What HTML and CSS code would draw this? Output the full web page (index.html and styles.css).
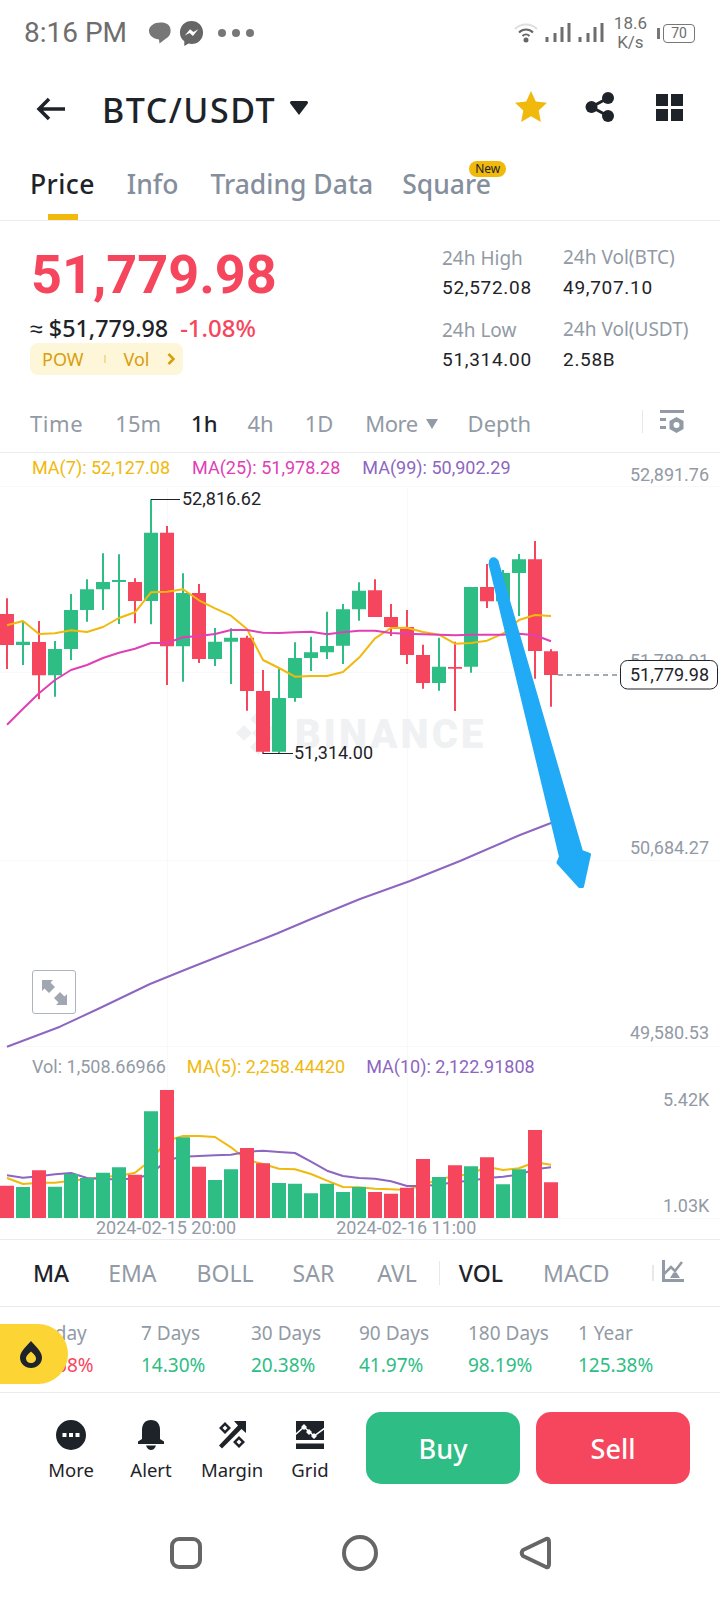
FILE: index.html
```html
<!DOCTYPE html>
<html lang="en">
<head>
<meta charset="utf-8">
<title>BTC/USDT</title>
<link rel="stylesheet" href="styles.css">
</head>
<body>
<div class="page">
  <div class="status">
    <div class="status-left">
      <span class="clock">8:16 PM</span>
      <svg class="st-chat" viewBox="0 0 24 26"><path d="M5 4.500C7 2 17 1.500 20 4.500C24 8 23.500 16 18 18.500L11.500 23.500L11 19.500C4 19 .5 14 1 10C1.300 7.500 3 5.500 5 4.500Z"/></svg>
      <svg class="st-msg" viewBox="0 0 26 28"><path d="M13 1C6 1 1 6 1 13C1 17 2.500 20 5.500 22V27L10 24.500C11 24.800 12 25 13 25C20 25 25 20 25 13C25 6 20 1 13 1Z"/><path class="st-bolt" d="M6 16L11.500 9.500L15 12.500L20 9.500L14.500 16.500L11 13.500Z"/></svg>
      <span class="st-dots"><i></i><i></i><i></i></span>
    </div>
    <div class="status-right">
      <svg class="st-wifi" viewBox="0 0 24 20"><path class="st-wifi-off" d="M1 6C7 0 17 0 23 6"/><path d="M5 9.500C9 5.500 15 5.500 19 9.500M8.500 13C10.500 11 13.500 11 15.500 13"/><circle cx="12" cy="17" r="1.500"/></svg>
      <svg class="st-sig" viewBox="0 0 26 20"><path d="M2 14v5M10 10v9M17 4v15M24 0v19"/></svg>
      <svg class="st-sig" viewBox="0 0 26 20"><path d="M2 14v5M10 10v9M17 4v15M24 0v19"/></svg>
      <span class="st-speed"><span>18.6</span><span>K/s</span></span>
      <span class="st-batt-nub"></span>
      <span class="st-batt">70</span>
    </div>
  </div>

  <div class="nav">
    <svg class="nav-back" viewBox="0 0 30 24"><path d="M29 12H4M13 2L3 12L13 22"/></svg>
    <span class="nav-title">BTC/USDT</span>
    <svg class="nav-caret" viewBox="0 0 18 14"><path d="M0 1.500Q0 0 1.500 0H16.500Q18 0 18 1.500Q18 2.500 17 3.500L9 14L1 3.500Q0 2.500 0 1.500Z"/></svg>
    <span class="nav-fill"></span>
    <svg class="nav-star" viewBox="0 0 32 31"><path d="M16 0L20.800 10.400L32 11.800L23.700 19.500L25.900 31L16 25.300L6.100 31L8.300 19.500L0 11.800L11.200 10.400Z"/></svg>
    <svg class="nav-share" viewBox="0 0 30 30"><circle cx="23" cy="6" r="6"/><circle cx="23" cy="24" r="6"/><circle cx="6.500" cy="15" r="6"/><path class="nav-share-l" d="M23 6L6.500 15L23 24"/></svg>
    <svg class="nav-grid" viewBox="0 0 27 27"><path d="M0 0h12v12H0zM15 0h12v12H15zM0 15h12v12H0zM15 15h12v12H15z"/></svg>
  </div>

  <div class="tabs">
    <span class="tab tab-on">Price</span>
    <span class="tab">Info</span>
    <span class="tab">Trading Data</span>
    <span class="tab tab-new">Square<em class="new-badge">New</em></span>
  </div>

  <div class="summary">
    <div class="sum-left">
      <div class="last-price">51,779.98</div>
      <div class="fiat-row"><span class="fiat">≈ $51,779.98</span><span class="change">-1.08%</span></div>
      <div class="tag"><span>POW</span><i class="tag-sep"></i><span>Vol</span><svg class="tag-chev" viewBox="0 0 8 12"><path d="M1.500 1L6.500 6L1.500 11"/></svg></div>
    </div>
    <div class="sum-stats">
      <div class="stat"><span class="stat-k">24h High</span><span class="stat-v">52,572.08</span></div>
      <div class="stat"><span class="stat-k stat-k-up">24h Vol(BTC)</span><span class="stat-v">49,707.10</span></div>
      <div class="stat"><span class="stat-k">24h Low</span><span class="stat-v">51,314.00</span></div>
      <div class="stat"><span class="stat-k stat-k-up">24h Vol(USDT)</span><span class="stat-v">2.58B</span></div>
    </div>
  </div>

  <div class="intervals">
    <span class="iv iv-time">Time</span>
    <span class="iv iv-15">15m</span>
    <span class="iv iv-on iv-1h">1h</span>
    <span class="iv iv-4h">4h</span>
    <span class="iv iv-1d">1D</span>
    <span class="iv iv-more">More</span>
    <svg class="iv-caret" viewBox="0 0 12 10"><path d="M0 0H12L6 10Z"/></svg>
    <span class="iv iv-depth">Depth</span>
    <span class="iv-fill"></span>
    <i class="iv-sep"></i>
    <svg class="iv-cfg" viewBox="0 0 24 23"><path class="cfg-fill" d="M0 0h24v3H0zM0 8h6v3H0zM0 16h6v3H0z"/><path class="cfg-hex" d="M16.500 7L23.500 11V19L16.500 23L9.500 19V11Z"/><circle class="cfg-hole" cx="16.500" cy="15" r="3"/></svg>
  </div>

  <div class="chart">
    <svg class="chart-svg" viewBox="0 453 720 786">
      <path class="grid" d="M0 486.500H720M0 672.500H720M0 860.500H720M0 1046.500H720M0 1218.500H720M167.500 486V1218M407.500 486V1218"/>
      <g class="mark">
        <path d="M258 711l8 8l-8 8l-8-8zM244 725l8 8l-8 8l-8-8zM272 725l8 8l-8 8l-8-8zM258 739l8 8l-8 8l-8-8zM258 727l6 6l-6 6l-6-6z"/>
        <text class="mark-text" x="295" y="748">BINANCE</text>
      </g>
      <path class="wick-up" d="M23 621.700V665M55 641V696.700M71 594V660M87 579.300V621.700M103 553.300V610M119 554.300V624M151 499.300V624.300M183 573.300V681.700M215 628V666M231 628.300V684M279 668.300V754M295 642.300V701.700M311 636.700V671M327 611.700V659M343 604V664M359 582.300V620.700M439 637.700V690.700M471 587V672.700M503 570V601.300M519 554V616"/>
      <path class="wick-down" d="M7 598.300V669M39 621V699.300M135 578.300V623.300M167 526V685M199 584V663M247 635.700V710.700M263 670V754M375 579.300V616.700M391 604V636M407 610V664M423 644.700V688.700M455 641.700V711M487 564V608M535 541V678.700M551 649.300V706.700"/>
      <path class="body-up" d="M16 641.700h14v3.300h-14zM48 649h14v26.300h-14zM64 610h14v39h-14zM80 589.300h14v20.700h-14zM96 582h14v7.300h-14zM112 580h14v2h-14zM144 532.700h14v68.300h-14zM176 593h14v53.300h-14zM208 641.700h14v17.300h-14zM224 637.700h14v4h-14zM272 698h14v53.700h-14zM288 658h14v40h-14zM304 652.300h14v5.700h-14zM320 646h14v6.300h-14zM336 609.300h14v36.400h-14zM352 590.700h14v18.600h-14zM432 666.700h14v16.300h-14zM464 587h14v79.700h-14zM496 573h14v28.300h-14zM512 559.300h14v13.700h-14z"/>
      <path class="body-down" d="M0 614h14v31H0zM32 642h14v33.300h-14zM128 582h14v19h-14zM160 532.700h14v113.600h-14zM192 593h14v66h-14zM240 637.700h14v53.300h-14zM256 691h14v60.700h-14zM368 590.300h14v26.700h-14zM384 617h14v10h-14zM400 627h14v28h-14zM416 655h14v28h-14zM448 667h14v1.700h-14zM480 587h14v14.300h-14zM528 559.300h14v91.700h-14zM544 651.300h14v23.700h-14z"/>
      <polyline class="ln ln-y" points="7,625.300 23,621 39,634 55,633.300 71,630.300 87,632 103,627 119,618 135,612.300 151,592.300 167,591.700 183,589.300 199,600.300 215,608.300 231,615.700 247,629 263,660 279,668 295,676.700 311,676 327,676 343,672 360,656.700 375,638.300 391,628 407,627.700 423,632 439,634.700 455,643.700 471,643 487,640.700 503,633.700 519,620 535,615 551,616"/>
      <polyline class="ln ln-p" points="7,724.700 23,708.700 39,693.300 55,680 71,670 87,665 103,658 119,652.700 135,648.700 151,643 167,643 183,637.300 199,636 215,634 231,630 247,630 263,632.700 279,633 295,632.300 311,631.700 327,634.300 343,632.300 359,630.700 375,630.700 391,633 407,633.700 423,634.300 439,634.700 455,635.300 471,634.700 487,634.700 503,634.700 519,633.700 535,635.300 551,641.300"/>
      <polyline class="ln ln-v" points="7,1046.700 60,1026.700 100,1008 150,984 187,969 230,952 277,933.500 310,919.500 360,899 410,881 460,861 520,835 551,823"/>
      <path class="leader" d="M151 499.500H180M263 753.500H293"/>
      <text class="ax ax-dark" x="182" y="505">52,816.62</text>
      <text class="ax ax-dark" x="294" y="759">51,314.00</text>
      <text class="ax" x="630" y="481">52,891.76</text>
      <text class="ax" x="630" y="667">51,788.91</text>
      <text class="ax" x="630" y="854">50,684.27</text>
      <text class="ax" x="630" y="1039">49,580.53</text>
      <text class="ax" x="663" y="1106">5.42K</text>
      <text class="ax" x="663" y="1212">1.03K</text>
      <path class="dash" d="M558 675H620"/>
      <rect class="pbox" x="620.500" y="660.500" width="97" height="28.500" rx="7"/>
      <text class="ax ax-dark" x="630" y="681">51,779.98</text>
      <g class="arrow">
        <circle cx="493.500" cy="562" r="4.700"/>
        <polygon points="490,564 560.500,856.700 558,862.700 579.500,886.500 582.500,886.500 589.500,854.500 581.500,851.500 497,561"/>
      </g>

      <polyline class="ln ln-y2" points="7,1178 23,1184 39,1182.700 55,1182.700 71,1180.700 87,1179.300 103,1176.700 119,1176 135,1172.700 151,1160 167,1140.700 183,1136 199,1136 215,1137 231,1147.300 247,1160 263,1164 279,1168.700 295,1169.300 311,1174 327,1180.700 343,1187 359,1187.300 375,1188.700 391,1189.300 407,1190 423,1184.700 439,1179.300 455,1176 471,1174 487,1166.700 503,1170 519,1168.300 535,1162.300 551,1164.700"/>
      <polyline class="ln ln-v2" points="7,1175.300 23,1177.700 39,1176.300 55,1174.300 71,1173 87,1178 103,1179.300 119,1179.300 135,1178.700 151,1174 167,1160 183,1156.700 199,1156 215,1155.300 231,1154.700 247,1151.700 263,1150.700 279,1152 295,1153 311,1161.700 327,1170.700 343,1176 359,1178 375,1178.700 391,1181.300 407,1186 423,1186 439,1184.700 455,1182 471,1180.700 487,1178 503,1176.700 519,1174.700 535,1169.300 551,1167.300"/>
      <path class="body-up" d="M16 1187h14v31h-14zM48 1186.700h14v31.300h-14zM64 1174h14v44h-14zM80 1178h14v40h-14zM96 1172.700h14v45.300h-14zM112 1167.300h14v50.700h-14zM144 1111.300h14v106.700h-14zM176 1137.300h14v80.700h-14zM208 1180h14v38h-14zM224 1169.300h14v48.700h-14zM272 1183h14v35h-14zM288 1183.700h14v34.300h-14zM304 1193.300h14v24.700h-14zM320 1183.700h14v34.300h-14zM336 1192h14v26h-14zM352 1187h14v31h-14zM432 1177h14v41h-14zM464 1166.300h14v51.700h-14zM496 1184.300h14v33.700h-14zM512 1169.300h14v48.700h-14z"/>
      <path class="body-down" d="M0 1185.700h14v32.300H0zM32 1170.300h14v47.700h-14zM128 1174.700h14v43.300h-14zM160 1090h14v128h-14zM192 1166.700h14v51.300h-14zM240 1148h14v70h-14zM256 1163.300h14v54.700h-14zM368 1192h14v26h-14zM384 1193.700h14v24.300h-14zM400 1187.700h14v30.300h-14zM416 1159h14v59h-14zM448 1165.300h14v52.700h-14zM480 1157.300h14v60.700h-14zM528 1130h14v88h-14zM544 1182.300h14v35.700h-14z"/>
    </svg>
    <div class="legend legend-ma">
      <span class="c-y">MA(7): 52,127.08</span>
      <span class="c-p">MA(25): 51,978.28</span>
      <span class="c-v">MA(99): 50,902.29</span>
    </div>
    <div class="legend legend-vol">
      <span class="c-g">Vol: 1,508.66966</span>
      <span class="c-y">MA(5): 2,258.44420</span>
      <span class="c-v">MA(10): 2,122.91808</span>
    </div>
    <button class="expand" type="button" aria-label="Expand">
      <svg viewBox="0 0 25 25"><path d="M0 0H11L8.500 2.500L13 7L7 13L2.500 8.500L0 11ZM25 25H14L16.500 22.500L12 18L18 12L22.500 16.500L25 14Z"/></svg>
    </button>
    <div class="dates"><span>2024-02-15 20:00</span><span>2024-02-16 11:00</span></div>
  </div>

  <div class="indicators">
    <span class="ind ind-on ind-ma">MA</span>
    <span class="ind ind-ema">EMA</span>
    <span class="ind ind-boll">BOLL</span>
    <span class="ind ind-sar">SAR</span>
    <span class="ind ind-avl">AVL</span>
    <i class="ind-sep"></i>
    <span class="ind ind-on ind-vol">VOL</span>
    <span class="ind ind-macd">MACD</span>
    <i class="ind-fade"></i>
    <svg class="ind-icon" viewBox="0 0 22 22"><path class="ind-zig" d="M2 14L9 7L13 11L20 2"/><path d="M0 0h3v19h19v3H0zM8 18L11.500 12.500H14.500L18 18Z"/></svg>
  </div>

  <div class="perf">
    <div class="perf-col perf-today"><span class="perf-k">Today</span><span class="perf-v v-down">-1.68%</span></div>
    <div class="perf-col perf-7"><span class="perf-k">7 Days</span><span class="perf-v">14.30%</span></div>
    <div class="perf-col perf-30"><span class="perf-k">30 Days</span><span class="perf-v">20.38%</span></div>
    <div class="perf-col perf-90"><span class="perf-k">90 Days</span><span class="perf-v">41.97%</span></div>
    <div class="perf-col perf-180"><span class="perf-k">180 Days</span><span class="perf-v">98.19%</span></div>
    <div class="perf-col perf-1y"><span class="perf-k">1 Year</span><span class="perf-v">125.38%</span></div>
    <div class="fire">
      <svg viewBox="0 0 22 27"><path fill-rule="evenodd" d="M11 0C14 4 22 10 22 16.500C22 22.500 17 27 11 27C5 27 0 22.500 0 16.500C0 10 8 4 11 0ZM11 10.500C9 12.500 6 14.500 6 17.500C6 20 8 22 11 22C14 22 16 20 16 17.500C16 14.500 13 12.500 11 10.500Z"/></svg>
    </div>
  </div>

  <div class="actions">
    <div class="act act-more">
      <svg class="act-ic" viewBox="0 0 30 30"><path fill-rule="evenodd" d="M15 0A15 15 0 1 1 15 30A15 15 0 1 1 15 0ZM6.500 13v4h4v-4zM13 13v4h4v-4zM19.500 13v4h4v-4z"/></svg>
      <span>More</span>
    </div>
    <div class="act act-alert">
      <svg class="act-ic" viewBox="0 0 26 30"><path d="M13 0C19 0 22 4 22 10V19L26 21.500V24H0V21.500L4 19V10C4 4 7 0 13 0ZM8 25.500H18C17 28.500 15 30 13 30C11 30 9 28.500 8 25.500Z"/></svg>
      <span>Alert</span>
    </div>
    <div class="act act-margin">
      <svg class="act-ic" viewBox="0 0 27 28"><path fill-rule="evenodd" d="M15 0H27V12L22.500 8L3 27.500L0 24.500L19 4.500ZM6 1L12 7L6 13L0 7ZM6 4.500L3.500 7L6 9.500L8.500 7ZM20 15L26 21L20 27L14 21ZM20 18.500L17.500 21L20 23.500L22.500 21Z"/></svg>
      <span>Margin</span>
    </div>
    <div class="act act-grid">
      <svg class="act-ic" viewBox="0 0 28 28"><path d="M0 0H28V19H0ZM0 22.500H28V28H0Z"/><path class="grid-zig" d="M-1 14L8 6L18 15L29 7"/><path class="grid-dot" d="M8 3L11 6L8 9L5 6ZM13 8L16 11L13 14L10 11ZM18 12L21 15L18 18L15 15Z"/></svg>
      <span>Grid</span>
    </div>
    <div class="act-buttons">
      <span class="btn btn-buy">Buy</span>
      <span class="btn btn-sell">Sell</span>
    </div>
  </div>

  <div class="sysnav">
    <svg class="sys-sq" viewBox="0 0 32 32"><rect x="2" y="2" width="28" height="28" rx="7"/></svg>
    <svg class="sys-ci" viewBox="0 0 36 36"><circle cx="18" cy="18" r="16"/></svg>
    <svg class="sys-tr" viewBox="0 0 32 34"><path d="M27 3Q30 2 30 6V28Q30 32 27 31L4 20Q1.500 17 4 14Z"/></svg>
  </div>
</div>
</body>
</html>
```

FILE: styles.css
```css
* { box-sizing: border-box; }
html, body { margin: 0; padding: 0; background: #fff; }
body { font-family: "Noto Sans", "Liberation Sans", sans-serif; color: #1e2329; }
.page { width: 720px; height: 1600px; overflow: hidden; display: flex; flex-direction: column; }

/* status bar */
.status { height: 66px; flex: none; display: flex; justify-content: space-between; align-items: center; padding: 0 25px 0 24px; color: #6e6e6e; font-family: Roboto, sans-serif; }
.status-left, .status-right { display: flex; align-items: center; }
.clock { font-size: 28px; line-height: 30px; }
.st-chat { width: 24px; height: 26px; margin-left: 21px; fill: #777; }
.st-msg { width: 25px; height: 27px; margin-left: 7px; fill: #666; }
.st-bolt { fill: #fff; }
.st-dots { display: flex; gap: 6px; margin-left: 14px; }
.st-dots i { width: 8px; height: 8px; border-radius: 50%; background: #777; }
.st-wifi { width: 24px; height: 20px; fill: #666; stroke: #666; stroke-width: 2; margin-right: 7px; }
.st-wifi path { fill: none; }
.st-wifi-off { stroke: #dedede; }
.st-sig { width: 26px; height: 20px; fill: none; stroke: #6e6e6e; stroke-width: 3; margin-right: 7px; }
.st-speed { display: flex; flex-direction: column; align-items: center; font-size: 17px; line-height: 19px; margin-left: 3px; margin-right: 10px; }
.st-batt-nub { width: 3px; height: 11px; background: #777; margin-right: 3px; }
.st-batt { width: 32px; height: 19px; border: 1.500px solid #777; border-radius: 4px; font-size: 14px; line-height: 16px; text-align: center; }

/* header */
.nav { height: 84px; flex: none; display: flex; align-items: center; padding: 0 36px; }
.nav-back { width: 30px; height: 24px; fill: none; stroke: #1e2329; stroke-width: 3.500; margin-top: 1px; flex: none; }
.nav-title { font-size: 34px; font-weight: 500; line-height: 40px; margin-left: 36px; letter-spacing: 1.500px; margin-top: 4px; }
.nav-caret { width: 18px; height: 14px; fill: #1e2329; margin-left: 14px; margin-top: 0; }
.nav-fill { flex: 1; }
.nav-star { width: 32px; height: 31px; fill: #f0b90b; margin-right: 38px; margin-top: -3px; }
.nav-share { width: 30px; height: 30px; fill: #1e2329; margin-right: 41px; margin-top: -3px; }
.nav-share-l { fill: none; stroke: #1e2329; stroke-width: 3; }
.nav-grid { width: 27px; height: 27px; fill: #1e2329; margin-top: -2px; margin-right: 1px; }

/* tabs */
.tabs { height: 71px; flex: none; display: flex; align-items: flex-start; border-bottom: 1px solid #eaecef; padding: 15px 0 0 30px; gap: 32px; }
.tab { position: relative; font-size: 26.500px; line-height: 38px; font-weight: 500; color: #848e9c; }
.tab-on { color: #1e2329; letter-spacing: .4px; }
.tab-on::after { content: ""; position: absolute; left: 18px; top: 49px; width: 30px; height: 6px; background: #f0b90b; }
.tab-new { margin-left: -3px; }
.new-badge { position: absolute; left: 67px; top: -4px; width: 37px; height: 16px; border-radius: 8px; background: #f0b90b; color: #1e2329; font-style: normal; font-weight: 400; font-size: 12px; line-height: 16px; text-align: center; }

/* summary */
.summary { height: 169px; flex: none; display: flex; justify-content: space-between; padding: 0 26px 0 30px; }
.last-price { font-family: Roboto, sans-serif; font-size: 54px; font-weight: 700; line-height: 66px; color: #f6465d; margin-top: 21px; padding-left: 1px; }
.fiat-row { display: flex; gap: 12px; margin-top: 5px; font-size: 23.300px; line-height: 30px; }
.fiat { font-weight: 500; }
.change { color: #f6465d; font-weight: 500; font-size: 24px; }
.tag { display: inline-flex; align-items: center; height: 32px; width: 153px; margin-top: 0; border-radius: 8px; background: #fef6d8; color: #d89f0c; font-size: 18px; padding-left: 12px; }
.tag-sep { width: 2px; height: 8px; background: #f2dc96; margin: 0 18px 0 20px; }
.tag-chev { width: 8px; height: 12px; fill: none; stroke: #d89f0c; stroke-width: 2.500; margin-left: 17px; }
.sum-stats { display: grid; grid-template-columns: 121px 131px; grid-auto-rows: 72px; padding-top: 23px; }
.stat { display: flex; flex-direction: column; gap: 3px; }
.stat-k { color: #929aa5; font-size: 19px; line-height: 28px; }
.stat-k-up { margin-top: -1px; margin-bottom: 1px; }
.stat-v { font-family: Roboto, sans-serif; font-size: 19px; line-height: 26px; letter-spacing: .7px; }

/* interval row */
.intervals { height: 63px; flex: none; display: flex; align-items: center; border-bottom: 1px solid #eaecef; padding: 4px 36px 0 30px; }
.iv { font-size: 22px; line-height: 30px; color: #929aa5; margin-right: 32px; }
.iv-on { color: #1e2329; font-weight: 500; }
.iv-time { letter-spacing: .6px; }
.iv-15 { margin-right: 30px; }
.iv-1h { margin-right: 30px; }
.iv-4h { margin-right: 31px; }
.iv-more { margin-right: 8px; letter-spacing: -.5px; }
.iv-caret { width: 12px; height: 10px; fill: #929aa5; margin: 2px 30px 0 0; }
.iv-depth { margin-right: 0; }
.iv-fill { flex: 1; }
.iv-sep { width: 1px; height: 23px; background: #e6e8ea; margin-right: 17px; margin-top: -4px; }
.iv-cfg { width: 24px; height: 23px; margin-top: -4px; }
.cfg-fill, .cfg-hex { fill: #929aa5; }
.cfg-hole { fill: #fff; }

/* chart */
.chart { position: relative; height: 787px; flex: none; border-bottom: 1px solid #eaecef; font-family: Roboto, sans-serif; }
.chart-svg { position: absolute; left: 0; top: 0; width: 720px; height: 786px; display: block; }
.grid { stroke: #f8f8f8; stroke-width: 1; fill: none; }
.mark { fill: #f0f1f2; }
.mark-text { font-family: Roboto, sans-serif; font-size: 40px; font-weight: 900; letter-spacing: 3px; }
.wick-up { stroke: #2ebd85; stroke-width: 2; fill: none; }
.wick-down { stroke: #f6465d; stroke-width: 2; fill: none; }
.body-up { fill: #2ebd85; }
.body-down { fill: #f6465d; }
.ln { fill: none; stroke-width: 2; stroke-linejoin: round; }
.ln-y, .ln-y2 { stroke: #f0b90b; }
.ln-p { stroke: #e040b5; }
.ln-v, .ln-v2 { stroke: #8d66c0; }
.leader { stroke: #1e2329; stroke-width: 1; fill: none; }
.ax { font-family: Roboto, sans-serif; font-size: 18px; fill: #929aa5; }
.ax-dark { fill: #1e2329; }
.dash { stroke: #848e9c; stroke-width: 1.500; stroke-dasharray: 5 4; fill: none; }
.pbox { fill: #fff; stroke: #1e2329; stroke-width: 1; }
.arrow { fill: #21aaf6; stroke: #21aaf6; stroke-width: 3; stroke-linejoin: round; }
.arrow circle { stroke: none; }
.legend { position: absolute; left: 32px; display: flex; line-height: 22px; font-size: 18px; }
.legend-ma { top: 4px; gap: 22px; }
.legend-vol { top: 603px; gap: 21px; }
.c-y { color: #f0b90b; }
.c-p { color: #e040b5; }
.c-v { color: #8d66c0; }
.c-g { color: #929aa5; }
.expand { position: absolute; left: 32px; top: 517px; width: 44px; height: 44px; padding: 8.500px; border: 1.500px solid #aeb4bc; border-radius: 3px; background: #fff; }
.expand svg { display: block; width: 25px; height: 25px; fill: #a0a7b1; }
.dates { position: absolute; left: 96px; top: 764px; display: flex; gap: 100px; font-size: 18px; line-height: 22px; color: #929aa5; }

/* indicators */
.indicators { height: 67px; flex: none; display: flex; align-items: center; border-bottom: 1px solid #eaecef; padding: 0 0 0 33px; }
.ind { font-size: 23px; line-height: 30px; color: #929aa5; }
.ind-on { color: #1e2329; font-weight: 500; }
.ind-ma { margin-right: 39px; }
.ind-ema { margin-right: 40px; }
.ind-boll { margin-right: 39px; }
.ind-sar { margin-right: 43px; }
.ind-avl { margin-right: 22px; }
.ind-sep { width: 1px; height: 24px; background: #e6e8ea; margin-right: 19px; }
.ind-vol { margin-right: 40px; }
.ind-macd { margin-right: 42px; }
.ind-fade { width: 2px; height: 16px; background: #e6e8ea; margin-right: 8px; }
.ind-icon { width: 22px; height: 22px; fill: #929aa5; margin-top: -4px; }
.ind-zig { fill: none; stroke: #929aa5; stroke-width: 2.500; }

/* performance */
.perf { position: relative; height: 86px; flex: none; border-bottom: 1px solid #eaecef; display: flex; padding-left: 34px; padding-top: 13px; }
.perf-col { display: flex; flex-direction: column; gap: 5px; }
.perf-today { width: 107px; }
.perf-7 { width: 110px; }
.perf-30 { width: 108px; }
.perf-90 { width: 109px; }
.perf-180 { width: 110px; }
.perf-k { font-size: 19px; line-height: 27px; color: #929aa5; }
.perf-v { font-size: 19px; line-height: 27px; color: #2ebd85; }
.v-down { color: #f6465d; }
.fire { position: absolute; left: 0; top: 17px; width: 68px; height: 60px; border-radius: 0 30px 30px 0; background: #fcd535; display: flex; align-items: center; padding-left: 20px; }
.fire svg { width: 22px; height: 27px; fill: #1e2329; }

/* actions */
.actions { height: 118px; flex: none; display: flex; align-items: flex-start; padding: 19px 30px 0 0; }
.act { display: flex; flex-direction: column; align-items: center; font-size: 18.500px; line-height: 26px; position: relative; margin-top: 8px; }
.act-ic { height: 30px; fill: #1e2329; margin-bottom: 7px; }
.act-more { margin-left: 49px; width: 44px; }
.act-more .act-ic { width: 30px; }
.act-alert { margin-left: 36px; width: 44px; }
.act-alert .act-ic { width: 26px; }
.act-margin { margin-left: 29px; width: 60px; }
.act-margin .act-ic { width: 27px; }
.act-grid { margin-left: 29px; width: 38px; }
.act-grid .act-ic { width: 28px; }
.grid-zig { fill: none; stroke: #fff; stroke-width: 1.500; }
.grid-dot { fill: #fff; }
.act-buttons { display: flex; gap: 16px; margin-left: auto; }
.btn { display: flex; align-items: center; justify-content: center; width: 154px; height: 72px; border-radius: 15px; color: #fff; font-size: 27px; font-weight: 500; }
.btn-buy { background: #2ebd85; }
.btn-sell { background: #f6465d; }

/* system nav */
.sysnav { flex: 1; position: relative; display: flex; align-items: flex-start; padding: 24px 0 0 170px; }
.sysnav svg { fill: none; stroke: #666; stroke-width: 4; flex: none; }
.sys-sq { width: 32px; height: 32px; margin-top: 2px; margin-right: 140px; }
.sys-ci { width: 36px; height: 36px; margin-right: 141px; }
.sys-tr { width: 32px; height: 34px; margin-top: 1px; }
```
